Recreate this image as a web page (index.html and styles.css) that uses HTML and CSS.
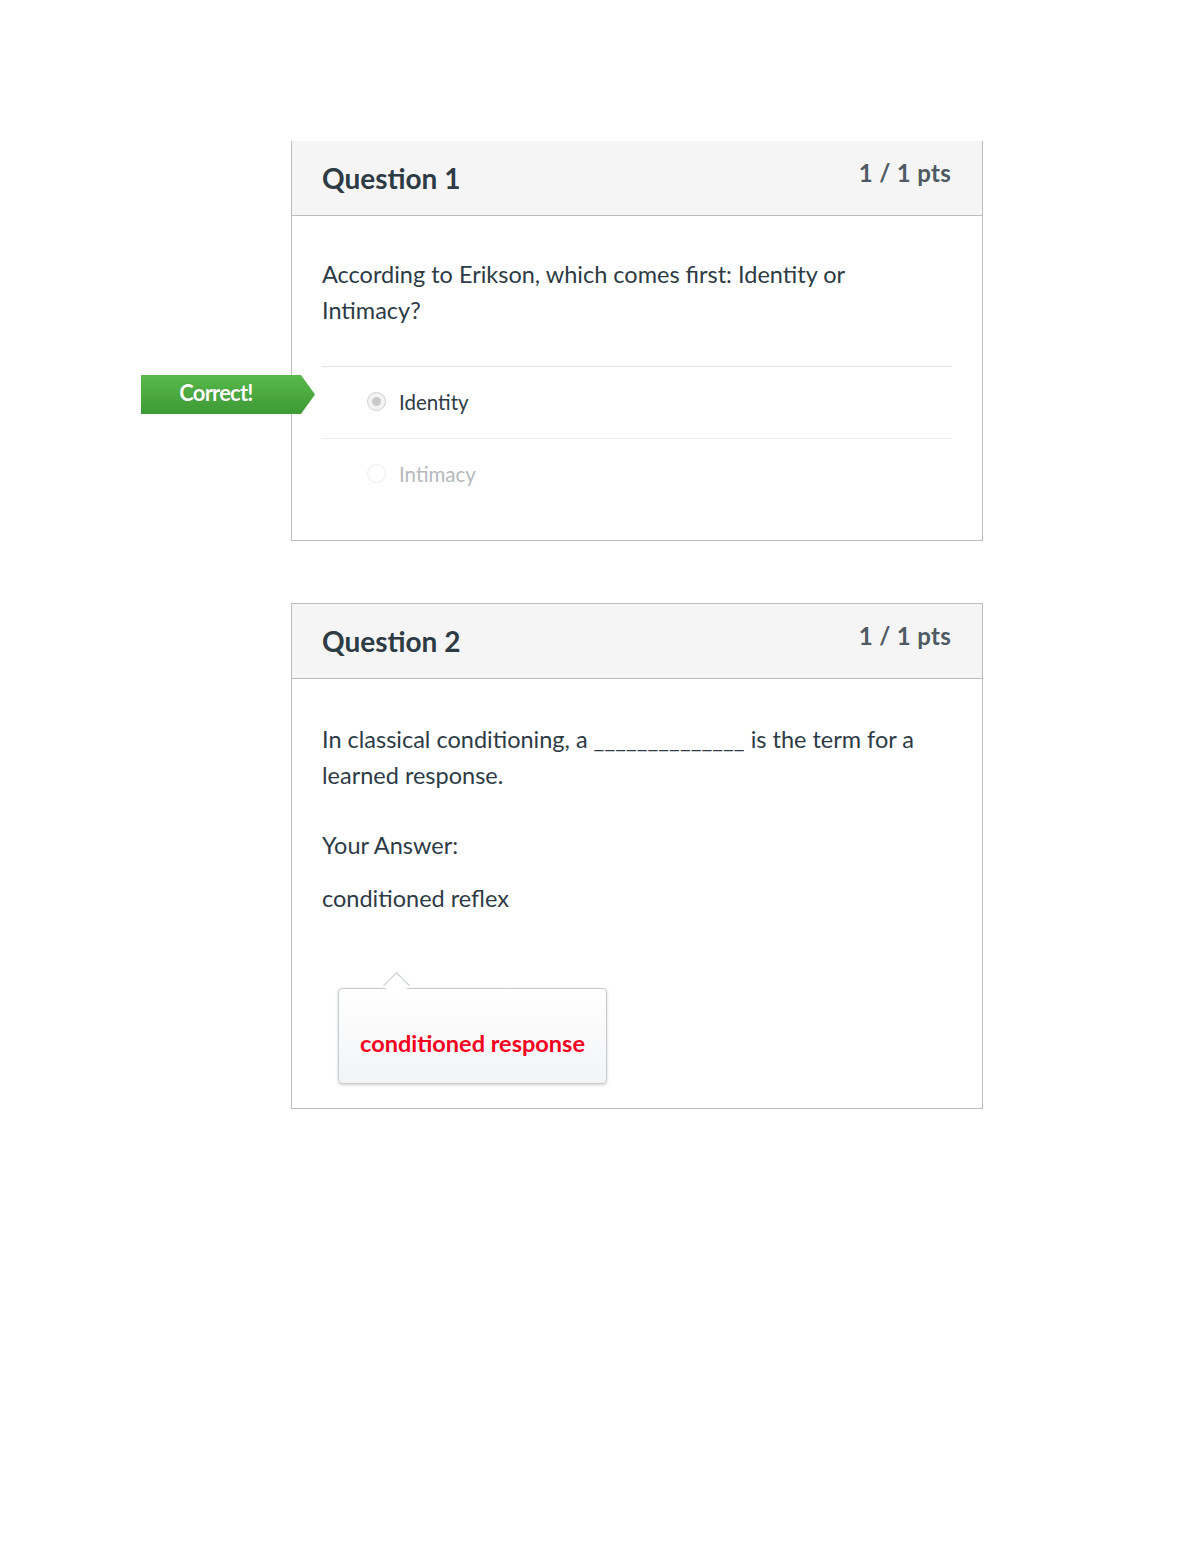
FILE: index.html
```html
<!DOCTYPE html>
<html>
<head>
<meta charset="utf-8">
<link rel="stylesheet" href="styles.css">
</head>
<body>
<div class="page">
  <section class="card card-first">
    <header class="card-head">
      <h2 class="q-title">Question 1</h2>
      <div class="pts">1 / 1 pts</div>
    </header>
    <div class="card-body">
      <p class="q-text">According to Erikson, which comes first: Identity or Intimacy?</p>
      <div class="answers">
        <div class="answer selected">
          <div class="flag">Correct!</div>
          <span class="radio checked"></span>
          <span class="a-label">Identity</span>
        </div>
        <div class="answer faded">
          <span class="radio"></span>
          <span class="a-label">Intimacy</span>
        </div>
      </div>
    </div>
  </section>

  <section class="card card-second">
    <header class="card-head">
      <h2 class="q-title">Question 2</h2>
      <div class="pts">1 / 1 pts</div>
    </header>
    <div class="card-body body2">
      <p class="q-text">In classical conditioning, a ______________ is the term for a learned response.</p>
      <p class="label-line">Your Answer:</p>
      <p class="given">conditioned reflex</p>
      <div class="bubble">
        <span class="bubble-text">conditioned response</span>
      </div>
    </div>
  </section>
</div>
</body>
</html>
```

FILE: styles.css
```css
* { box-sizing: border-box; }
html, body { margin: 0; padding: 0; background: #fff; }
body {
  font-family: Lato, "Open Sans", "Liberation Sans", sans-serif;
  color: #2d3b45;
  width: 1200px;
  height: 1553px;
}
.page {
  padding: 141px 0 0 291px;
  display: flex;
  flex-direction: column;
  gap: 62px;
}
.card {
  width: 692px;
  border: 1px solid #bdbdbd;
  background: #fff;
}
.card-first { border-top: none; }
.card-head {
  background: #f5f5f5;
  border-bottom: 1px solid #bdbdbd;
  height: 75px;
  display: flex;
  justify-content: space-between;
  padding: 0 31px 0 30px;
}
.q-title {
  margin: 0;
  font-size: 28px;
  font-weight: 700;
  color: #2d3b45;
  line-height: 1;
  padding-top: 23px;
}
.pts {
  font-size: 24px;
  font-weight: 700;
  color: #4e5a63;
  line-height: 1;
  padding-top: 20px;
  letter-spacing: 0.3px;
}
.card-body {
  padding: 40px 30px 0 30px;
}
.q-text {
  margin: 0;
  font-size: 23.5px;
  line-height: 36px;
  width: 600px;
  color: #2d3b45;
}
.answers {
  margin-top: 38px;
  margin-bottom: 30px;
}
.answer {
  position: relative;
  height: 72px;
  border-top: 1px solid #e1e4e6;
  display: flex;
  align-items: center;
  padding-left: 45px;
  padding-bottom: 2px;
}
.answer + .answer { border-top: 1px solid #eceeef; }
.radio {
  width: 19px;
  height: 19px;
  border-radius: 50%;
  border: 1px solid #d7d7d7;
  background: #fff;
  margin-right: 13px;
  display: inline-block;
  position: relative;
}
.radio.checked { border-color: #cfcfcf; background: #f3f3f3; }
.radio.checked::after {
  content: "";
  position: absolute;
  left: 4px; top: 4px;
  width: 9px; height: 9px;
  border-radius: 50%;
  background: #c9c9c9;
}
.faded .radio { border-color: #ececec; }
.a-label {
  font-size: 20.5px;
  color: #2d3b45;
}
.faded .a-label { color: #b4b9bd; }
.flag {
  position: absolute;
  left: -181px;
  top: 8px;
  width: 174px;
  height: 39px;
  background: linear-gradient(#58b94b, #3e9a35);
  clip-path: polygon(0 0, 160px 0, 174px 50%, 160px 100%, 0 100%);
  color: #fff;
  font-weight: 700;
  font-size: 22px;
  letter-spacing: -0.8px;
  text-align: center;
  padding-right: 24px;
  line-height: 36px;
  text-shadow: 0 0 1px rgba(0,0,0,0.3);
}
.body2 { padding-top: 42px; padding-bottom: 24px; }
.label-line {
  margin: 34px 0 0 0;
  font-size: 23.5px;
  line-height: 36px;
}
.given {
  margin: 17px 0 0 0;
  font-size: 23.5px;
  line-height: 36px;
}
.bubble {
  position: relative;
  margin: 72px 0 0 16px;
  width: 269px;
  height: 96px;
  border: 1px solid #c4cbd1;
  border-radius: 4px;
  background: linear-gradient(#ffffff, #f3f4f6);
  box-shadow: 0 1px 3px rgba(0,0,0,0.18);
  display: flex;
  align-items: center;
  justify-content: center;
  padding-top: 14px;
}
.bubble::before {
  content: "";
  position: absolute;
  left: 48px;
  top: -13px;
  width: 18px;
  height: 18px;
  background: #fff;
  border-left: 1px solid #c4cbd1;
  border-top: 1px solid #c4cbd1;
  transform: rotate(45deg);
}
.bubble-text {
  color: #f4001f;
  font-size: 23.5px;
  font-weight: 700;
}
```
